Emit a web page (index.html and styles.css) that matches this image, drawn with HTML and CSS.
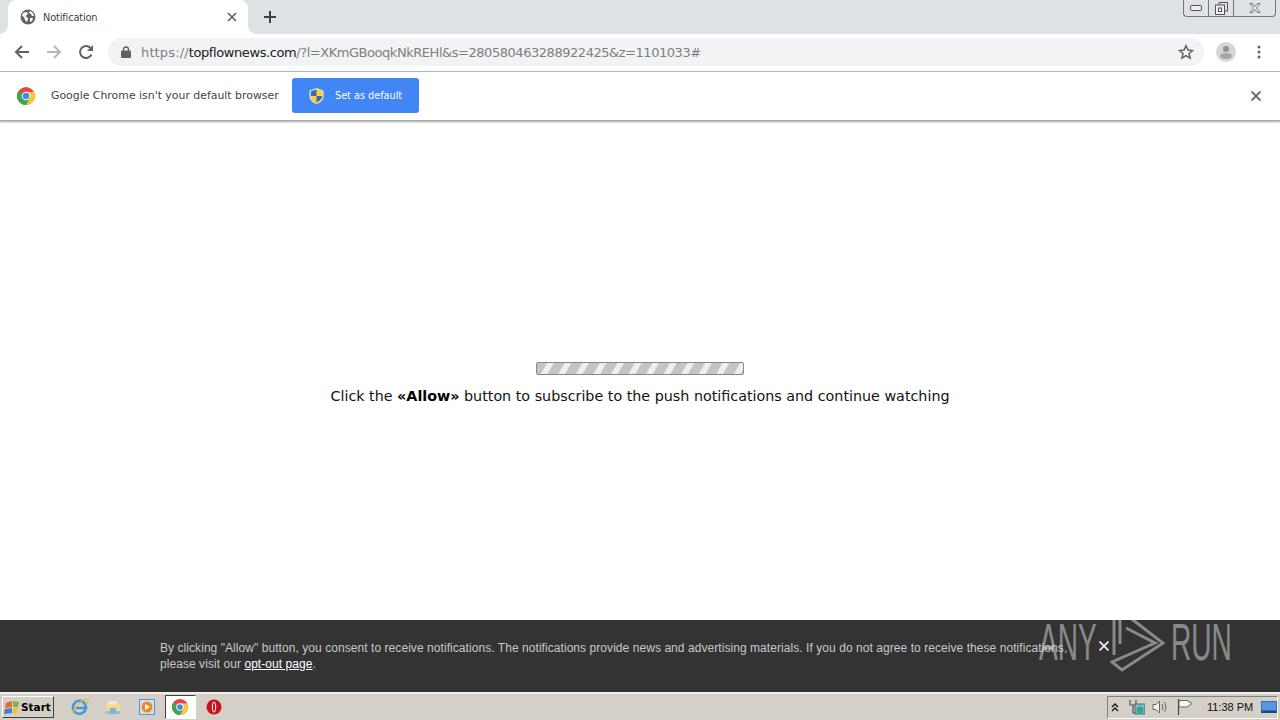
FILE: index.html
```html
<!DOCTYPE html>
<html lang="en">
<head>
<meta charset="utf-8">
<title>Notification</title>
<link rel="stylesheet" href="styles.css">
</head>
<body>
<div class="screen">
  <header class="tabstrip">
    <div class="tab">
      <svg class="ico-globe" width="16" height="16" viewBox="0 0 16 16"><circle cx="8" cy="8" r="7.5" fill="#5f6368"/><path d="M3 4l3-1 2 1-1 2-2 1 2 1 1 2-1 3-2-2-1-3-2-1zM10 2l3 2 1 3-2 0-1-2-2-1zM10 9l3 0-1 3-2 1z" fill="#fff"/></svg>
      <span class="tab-title">Notification</span>
      <svg class="tab-close" width="10" height="10" viewBox="0 0 10 10"><path d="M1 1l8 8M9 1l-8 8" stroke="#5f6368" stroke-width="1.6"/></svg>
    </div>
    <svg class="new-tab" width="12" height="12" viewBox="0 0 12 12"><path d="M6 0v12M0 6h12" stroke="#3c4043" stroke-width="2"/></svg>
    <div class="win-controls">
      <div class="win-btn btn-min"><svg width="12" height="6" viewBox="0 0 12 6"><rect x=".5" y=".5" width="11" height="5" rx="1.5" fill="#eef0f3" stroke="#555"/></svg></div>
      <div class="win-btn btn-max"><svg width="13" height="13" viewBox="0 0 13 13"><path d="M4 3V.5h8.500V9H10" fill="none" stroke="#555"/><rect x=".5" y="3" width="9" height="9.500" fill="#eef0f3" stroke="#555"/><rect x="3.500" y="6" width="3" height="3.500" fill="none" stroke="#555"/></svg></div>
      <div class="win-btn btn-close"><svg width="12" height="10" viewBox="0 0 12 10"><path d="M1 .5h2.500L6 3.500 8.500.5H11L7.500 5 11 9.500H8.500L6 6.500 3.500 9.500H1L4.500 5z" fill="#eef0f3" stroke="#555" stroke-width=".8"/></svg></div>
    </div>
  </header>

  <nav class="toolbar">
    <svg class="nav" width="16" height="16" viewBox="0 0 16 16"><path d="M15 8H2M8 2L2 8l6 6" fill="none" stroke="#5f6368" stroke-width="2"/></svg>
    <svg class="nav" width="16" height="16" viewBox="0 0 16 16"><path d="M1 8h13M8 2l6 6-6 6" fill="none" stroke="#b4b7bb" stroke-width="2"/></svg>
    <svg class="nav" width="16" height="16" viewBox="0 0 16 16"><path d="M13.500 10.500A6 6 0 1 1 12.500 4" fill="none" stroke="#5f6368" stroke-width="2"/><path d="M15 1v6H9z" fill="#5f6368"/></svg>
    <div class="omnibox">
      <svg class="lock" width="10" height="12" viewBox="0 0 10 12"><path d="M2.500 5V3.500a2.500 2.500 0 0 1 5 0V5" fill="none" stroke="#5f6368" stroke-width="1.300"/><rect y="4.500" width="10" height="7.500" rx="1" fill="#5f6368"/></svg>
      <div class="url"><span class="dim scheme">https://</span><span class="host">topflownews.com</span><span class="dim path">/?l=XKmGBooqkNkREHl&amp;s=280580463288922425&amp;z=1101033#</span></div>
      <svg class="star" width="16" height="16" viewBox="0 0 16 16"><path d="M8 1.800l1.900 4.300 4.600.4-3.500 3 1.100 4.600L8 11.700l-4.100 2.400L5 9.500l-3.500-3 4.600-.4z" fill="none" stroke="#5f6368" stroke-width="1.500"/></svg>
    </div>
    <svg class="avatar" width="20" height="20" viewBox="0 0 20 20"><circle cx="10" cy="10" r="10" fill="#d5d6d8"/><circle cx="10" cy="7" r="3" fill="#8f9194"/><ellipse cx="10" cy="14" rx="6" ry="3" fill="#a3a5a8"/></svg>
    <svg class="menu" width="4" height="14" viewBox="0 0 4 14"><circle cx="2" cy="2" r="1.500" fill="#5f6368"/><circle cx="2" cy="7" r="1.500" fill="#5f6368"/><circle cx="2" cy="12" r="1.500" fill="#5f6368"/></svg>
  </nav>

  <section class="infobar">
    <svg class="chrome-logo" width="18" height="18" viewBox="0 0 18 18"><circle cx="9" cy="9" r="9" fill="#e8453c"/><path d="M9 9L1.200 4.500A9 9 0 0 0 9 18l4-6z" fill="#3aa757"/><path d="M9 5h8a9 9 0 0 1-8 13l4-7z" fill="#fcc934"/><circle cx="9" cy="9" r="4.200" fill="#fff"/><circle cx="9" cy="9" r="3.200" fill="#4285f4"/></svg>
    <span class="info-text">Google Chrome isn't your default browser</span>
    <div class="default-btn">
      <svg width="15" height="16" viewBox="0 0 16 17"><path d="M8 .5L15 3v6c0 4-3.500 6.500-7 7.500C4.500 15.500 1 13 1 9V3z" fill="#f4d13f" stroke="#dfe6f2"/><path d="M8 1.500V8.500H2V3.500zM8 8.500h6c0 3-3 5.500-6 6.800z" fill="#3a6bb5"/></svg>
      <span>Set as default</span>
    </div>
    <svg class="info-close" width="10" height="10" viewBox="0 0 10 10"><path d="M.5.500l9 9M9.500.500l-9 9" stroke="#5f6368" stroke-width="1.800"/></svg>
  </section>

  <main class="page">
    <div class="progress"></div>
    <p class="prompt">Click the <b>«Allow»</b> button to subscribe to the push notifications and continue watching</p>
  </main>

  <section class="consent">
    <p class="consent-text">By clicking "Allow" button, you consent to receive notifications. The notifications provide news and advertising materials. If you do not agree to receive these notifications, please visit our <u class="optout">opt-out page</u>.</p>
    <svg class="consent-close" width="10" height="10" viewBox="0 0 10 10"><path d="M.5.500l9 9M9.500.500l-9 9" stroke="#f2f2f2" stroke-width="1.700"/></svg>
    <div class="watermark">
      <span class="wm-text">ANY</span>
      <svg class="wm-logo" width="55" height="64" viewBox="0 0 55 64"><path d="M4 9V47M10 2V36M10 2L53 35 12 62 2 54 45 35 16 20" fill="none" stroke="#fff" stroke-width="3"/></svg>
      <span class="wm-text">RUN</span>
    </div>
  </section>

  <footer class="taskbar">
    <div class="start">
      <svg width="16" height="15" viewBox="0 0 16 15"><path d="M2 3l6-2v6l-7 1z" fill="#e8672c"/><path d="M9 1l6 1-1 5-5 0z" fill="#7cb53c"/><path d="M1 9l7-1v5l-8 1z" fill="#3f80d8"/><path d="M9 8h5l-1 6-4-1z" fill="#f1c232"/></svg>
      <span>Start</span>
    </div>
    <div class="quick">
      <div class="qi"><svg width="18" height="18" viewBox="0 0 18 18"><path d="M14.500 11.500A6.500 6.500 0 1 1 14 6l1 4H5" fill="none" stroke="#3f9ae0" stroke-width="2.600"/><path d="M1 16C4 8 12 0 16.500 1.500c1.500 1-.5 4-1.500 5" fill="none" stroke="#e8b93c" stroke-width="1.200"/></svg></div>
      <div class="qi"><svg width="16" height="16" viewBox="0 0 16 16"><path d="M3 2h9v4H3z" fill="#e6edd8"/><path d="M1 5h14v10H1z" fill="#f3dc8b"/><path d="M5 9h6v6H5z" fill="#7fb4dd"/><path d="M1 12h4v3H1zM11 12h4v3h-4z" fill="#8fbfe3"/></svg></div>
      <div class="qi"><svg width="16" height="16" viewBox="0 0 16 16"><rect x=".5" y=".5" width="15" height="15" fill="#cfe0f2" stroke="#5b93cc"/><circle cx="8" cy="8" r="5.500" fill="#f08a1d"/><path d="M6 5l5 3-5 3z" fill="#fff"/></svg></div>
      <div class="qi active"><svg width="16" height="16" viewBox="0 0 18 18"><circle cx="9" cy="9" r="9" fill="#e8453c"/><path d="M9 9L1.200 4.500A9 9 0 0 0 9 18l4-6z" fill="#3aa757"/><path d="M9 5h8a9 9 0 0 1-8 13l4-7z" fill="#fcc934"/><circle cx="9" cy="9" r="4.200" fill="#fff"/><circle cx="9" cy="9" r="3.200" fill="#4285f4"/></svg></div>
      <div class="qi"><svg width="16" height="16" viewBox="0 0 16 16"><circle cx="8" cy="8" r="7.500" fill="#c8111a"/><ellipse cx="8" cy="8" rx="2.200" ry="5.500" fill="#f7dcdc"/><ellipse cx="8" cy="8" rx="1" ry="4.200" fill="#c8111a"/></svg></div>
    </div>
    <div class="tray">
      <svg class="t-arrow" width="8" height="9" viewBox="0 0 8 9"><path d="M1 4l3-3 3 3M1 8l3-3 3 3" fill="none" stroke="#111" stroke-width="1.300"/></svg>
      <svg class="t-net" width="16" height="16" viewBox="0 0 16 16"><path d="M1 1v5h6V1M4 6v8h4" fill="none" stroke="#555" stroke-width="1.200"/><rect x="6" y="5" width="10" height="10" fill="#8fb7c4" stroke="#40707f"/><circle cx="11" cy="11" r="3.500" fill="#2fa88c"/></svg>
      <svg class="t-vol" width="16" height="14" viewBox="0 0 16 14"><path d="M1 4.500h3L7.500 1v12L4 9.500H1z" fill="#eee" stroke="#666"/><path d="M10 4q2 3 0 6M12.500 2q3 5 0 10" fill="none" stroke="#666"/></svg>
      <svg class="t-flag" width="16" height="16" viewBox="0 0 16 16"><path d="M1.500 0v16" stroke="#444" stroke-width="1.200"/><path d="M2 1.500h8l5 3-5 3.500H2z" fill="#f6f6f6" stroke="#666"/></svg>
      <span class="clock">11:38 PM</span>
      <svg class="show-desktop" width="16" height="12" viewBox="0 0 16 12"><rect width="16" height="12" fill="#2f6fc0"/><rect x="1" y="1" width="14" height="8" fill="#5b95dc"/><rect y="10" width="16" height="2" fill="#1b4a8a"/></svg>
    </div>
  </footer>
</div>
</body>
</html>
```
FILE: styles.css
```css
* { box-sizing: border-box; }
html, body { margin: 0; height: 100%; }
body { font-family: "DejaVu Sans", sans-serif; background: #fff; overflow: hidden; }
svg { display: block; flex: none; }
.screen { width: 1280px; height: 720px; display: flex; flex-direction: column; overflow: hidden; }

.tabstrip { height: 34px; background: #dee1e6; display: flex; align-items: flex-end; padding-left: 8px; flex: none; }
.tab { width: 240px; height: 34px; background: #fff; border-radius: 8px 8px 0 0; display: flex; align-items: center; padding: 0 11px 0 12px; position: relative; }
.tab::before, .tab::after { content: ""; position: absolute; bottom: 0; width: 8px; height: 8px; }
.tab::before { left: -8px; background: radial-gradient(circle at 0 0, #dee1e6 7.500px, #fff 8px); }
.tab::after { right: -8px; background: radial-gradient(circle at 100% 0, #dee1e6 7.500px, #fff 8px); }
.tab-title { font-size: 9.800px; letter-spacing: -.15px; color: #3c4043; margin-left: 7px; flex: 1; }
.new-tab { margin: 0 0 11px 16px; }
.win-controls { margin-left: auto; margin-right: 4px; align-self: flex-start; display: flex; height: 17px; border: 1px solid #71757c; border-top: 0; border-radius: 0 0 4px 4px; background: #dee1e6; }
.win-btn { display: flex; align-items: center; justify-content: center; height: 16px; }
.btn-min { width: 25px; border-right: 1px solid #71757c; }
.btn-max { width: 25px; border-right: 1px solid #71757c; }
.btn-close { width: 41px; }

.toolbar { height: 38px; background: #fff; border-bottom: 1px solid #b9babc; display: flex; align-items: center; padding: 0 18px 1px 14px; gap: 16px; flex: none; }
.omnibox { width: 1096px; height: 28px; margin-left: -2px; background: #f1f3f4; border-radius: 14px; display: flex; align-items: center; padding: 0 10px 0 13px; }
.lock { margin-right: 10px; }
.url { font-size: 13px; white-space: nowrap; flex: 1; }
.dim { color: #7b7f84; }
.scheme { letter-spacing: .14px; }
.host { color: #202124; letter-spacing: -.4px; }
.path { letter-spacing: -.46px; }
.avatar { margin-left: -4px; }
.menu { margin-left: 5px; }

.infobar { height: 49px; background: #fff; border-bottom: 1px solid #a8a8a8; box-shadow: 0 1px 2px rgba(0,0,0,.35); display: flex; align-items: center; padding: 0 19px 1px 17px; flex: none; position: relative; }
.info-text { font-size: 10.900px; color: #444; margin-left: 16px; width: 241px; white-space: nowrap; }
.default-btn { width: 127px; height: 35px; background: #4285f4; border-radius: 3px; display: flex; align-items: center; padding-left: 17px; gap: 11px; color: #fff; font-size: 9.700px; }
.info-close { margin-left: auto; }

.page { flex: 1; background: #fff; display: flex; flex-direction: column; align-items: center; padding-top: 241px; }
.progress { width: 208px; height: 13px; border: 1px solid #888; border-radius: 2px; background: repeating-linear-gradient(120deg, #c4c4c4 0 8px, #efefef 9.500px 14px, #c4c4c4 15.200px); }
.prompt { margin: 10px 0 0; font-size: 14.300px; line-height: 22px; color: #111; white-space: nowrap; }
.prompt b { color: #000; }

.consent { height: 72px; background: #333; position: relative; padding: 20px 0 0 160px; flex: none; }
.consent-text { margin: 0; width: 925px; font-family: "Liberation Sans", sans-serif; font-size: 12px; line-height: 16px; color: #c8c8c8; letter-spacing: .06px; }
.optout { color: #fff; }
.consent-close { position: absolute; left: 1099px; top: 21px; }
.watermark { position: absolute; left: 1039px; top: -12px; width: 192px; height: 64px; display: flex; align-items: center; opacity: .42; font-family: "Liberation Sans", sans-serif; font-size: 52px; line-height: 64px; color: #fff; }
.wm-text { width: 60px; flex: none; display: inline-block; white-space: nowrap; transform: scaleX(.54); transform-origin: left center; padding-top: 4px; }
.wm-logo { margin: 0 6px 0 11px; }

.taskbar { height: 28px; background: #d4d0c8; border-top: 2px solid #f1efe9; display: flex; align-items: center; flex: none; }
.start { width: 52px; height: 22px; margin-left: 2px; display: flex; align-items: center; gap: 1px; padding-left: 1px; background: #d4d0c8; border: 1px solid; border-color: #fff #404040 #404040 #fff; font-size: 10.500px; font-weight: 700; color: #000; }
.quick { display: flex; align-items: center; margin-left: 9px; }
.qi { width: 33.500px; height: 24px; display: flex; align-items: center; justify-content: center; }
.qi.active { width: 31px; margin: 0 1.250px; background: #fff; border: 1px solid; border-color: #404040 #fff #fff #404040; }
.tray { margin-left: auto; width: 171px; height: 23px; margin-right: 2px; border: 1px solid; border-color: #808080 #fff #fff #808080; display: flex; align-items: center; padding-left: 3px; }
.t-net { margin-left: 10px; }
.t-vol { margin-left: 7px; }
.t-flag { margin-left: 9px; }
.clock { font-family: "Liberation Sans", sans-serif; font-size: 11px; color: #111; margin-left: 14px; white-space: nowrap; }
.show-desktop { margin-left: 8px; }
```
